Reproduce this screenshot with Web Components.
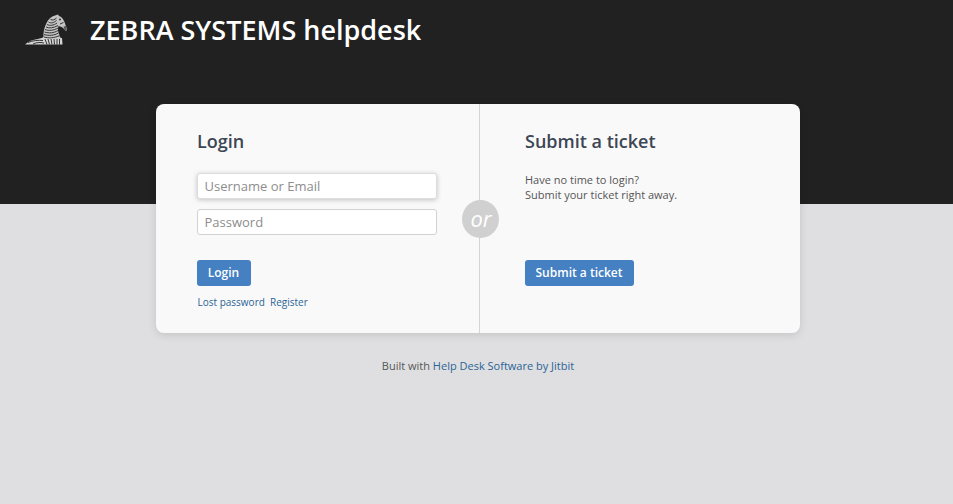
<!DOCTYPE html>
<html>
<head>
<meta charset="utf-8">
<title>ZEBRA SYSTEMS helpdesk</title>
<style>
    html, body { margin: 0; padding: 0; }
    body {
        background: #dfdfe1;
        font-family: "Open Sans", "Noto Sans", sans-serif;
        color: #333;
    }
</style>
</head>
<body>
<hd-header title-text="ZEBRA SYSTEMS helpdesk"></hd-header>
<hd-card>
    <hd-pane slot="left" heading="Login">
        <hd-field placeholder="Username or Email" focused></hd-field>
        <hd-field placeholder="Password"></hd-field>
        <hd-button slot="action">Login</hd-button>
        <div slot="links" style="font-size:10px;line-height:14px;color:#2a6496;padding-left:.5px">Lost password&nbsp; Register</div>
    </hd-pane>
    <hd-pane slot="right" heading="Submit a ticket">
        <div style="font-size:11px;line-height:15px;color:#555;margin-top:-1px">Have no time to login?<br>Submit your ticket right away.</div>
        <hd-button slot="action">Submit a ticket</hd-button>
    </hd-pane>
</hd-card>
<hd-footer></hd-footer>

<script>
class HdHeader extends HTMLElement {
    constructor() {
        super();
        this.attachShadow({ mode: 'open' });
        this.shadowRoot.innerHTML = `
<style>
    :host {
        display: flex;
        align-items: flex-start;
        box-sizing: border-box;
        height: 204px;
        padding: 12px 0 0 24px;
        gap: 22px;
        background: #212121;
    }
    h1 {
        margin: 0;
        color: #fff;
        font-size: 27px;
        line-height: 36px;
        font-weight: 600;
    }
    svg { display: block; margin-top: 2px; filter: blur(.3px); }
</style>
<svg width="44" height="34" viewBox="0 0 44 34">
    <!-- rump and belly -->
    <path fill="#d4d4d4" d="M1 30.500 C4 27.500 9 25.500 14 25 C16 24.500 18 24 19.500 23 L38 24 L38.500 30.500 Z"/>
    <!-- neck and head -->
    <path fill="#c4c4c4" d="M19.500 24 C19 19 20 14 22.500 9 C24.500 5 27 2.500 31 1.500 L34 0.500 L35 2 C38.500 3 40.500 7 41.500 11 C42.500 13 43 15 42.500 17 C41 16.500 40 14.500 38.500 13.500 C37 12.500 35.500 12.500 34.500 12 C33.500 15 34 18 35.500 21 L37 25 Z"/>
    <!-- stripes -->
    <g fill="none" stroke="#222" stroke-width=".9">
        <path d="M4 28.500 C9 26.500 14 26 19 26.500"/>
        <path d="M9 30 C12 28.500 16 28 20 29"/>
        <path d="M21 25 L23 30.500"/>
        <path d="M24 25 L25.500 30.500"/>
        <path d="M27 25 L28 30.500"/>
        <path d="M30 25 L30.500 30.500"/>
        <path d="M33 25 L33 30.500"/>
        <path d="M35.500 25 L35.500 30.500"/>
        <path d="M20 23 C25 24.500 30 24 36 21.500"/>
        <path d="M20 20.500 C25 22 30 21.500 34.500 19"/>
        <path d="M20.500 18 C25 19.500 30 19 34 16.500"/>
        <path d="M21 15.500 C25 17 29.500 16.500 34 14"/>
        <path d="M22 13 C25 14.500 29.500 14 34 11.500"/>
        <path d="M23 10.500 C26 12 29.500 11.500 33 9"/>
        <path d="M24.500 8 C27 9.500 29.500 9 32.500 6.500"/>
        <path d="M26.500 5.500 C28.500 6.500 30.500 6 32.500 4"/>
        <path d="M36 10 L39.500 8.500"/>
    </g>
    <!-- eye and muzzle -->
    <circle cx="36" cy="5.500" r=".9" fill="#222"/>
    <path fill="#555" d="M39.500 12.500 L42 12 L42.500 17 L40.500 15.500 Z"/>
</svg>
<h1>${this.getAttribute('title-text')}</h1>
`;
    }
}

const cardTemplate = document.createElement('template');
cardTemplate.innerHTML = `
<style>
    :host {
        display: flex;
        position: relative;
        box-sizing: border-box;
        width: 644px;
        height: 229px;
        margin: -100px auto 0 156px;
        background: #f9f9f9;
        border-radius: 8px;
        box-shadow: 0 2px 8px rgba(0,0,0,0.12);
    }
    .side { display: block; }
    .left { flex: 0 0 323px; border-right: 1px solid #d5d5d5; }
    .right { flex: 1; }
    .or {
        position: absolute;
        left: 306px;
        top: 96px;
        width: 37px;
        height: 38px;
        border-radius: 50%;
        background: #d0d0d0;
        color: #fff;
        font-size: 22px;
        font-style: italic;
        line-height: 36px;
        text-align: center;
        text-indent: 1px;
    }
</style>
<div class="side left"><slot name="left"></slot></div>
<div class="side right"><slot name="right"></slot></div>
<div class="or">or</div>
`;

class HdCard extends HTMLElement {
    constructor() {
        super();
        this.attachShadow({ mode: 'open' });
        this.shadowRoot.appendChild(cardTemplate.content.cloneNode(true));
    }
}

const paneTemplate = document.createElement('template');
paneTemplate.innerHTML = `
<style>
    :host {
        display: flex;
        flex-direction: column;
        box-sizing: border-box;
        height: 100%;
        padding: 24px 0 0 41px;
    }
    :host([slot=right]) { padding-left: 45px; }
    h2 {
        margin: 0 0 18px;
        font-size: 18px;
        line-height: 27px;
        font-weight: 600;
        color: #3c4654;
    }
    .body { display: flex; flex-direction: column; gap: 10px; height: 87px; }
    .links { margin-top: 9px; }
</style>
<h2></h2>
<div class="body"><slot></slot></div>
<slot name="action"></slot>
<div class="links"><slot name="links"></slot></div>
`;

class HdPane extends HTMLElement {
    constructor() {
        super();
        this.attachShadow({ mode: 'open' });
        this.shadowRoot.appendChild(paneTemplate.content.cloneNode(true));
        this.shadowRoot.querySelector('h2').textContent = this.getAttribute('heading');
    }
}

class HdField extends HTMLElement {
    constructor() {
        super();
        this.attachShadow({ mode: 'open' });
        this.shadowRoot.innerHTML = `
<style>
    :host { display: block; width: 240px; height: 26px; }
    input {
        display: block;
        box-sizing: border-box;
        width: 100%;
        height: 100%;
        margin: 0;
        padding: 0 6.500px;
        border: 1px solid #d2d2d2;
        border-radius: 3px;
        background: #fff;
        font: 13px "Open Sans", sans-serif;
        outline: none;
    }
    input::placeholder { color: #8d8d8d; opacity: 1; }
    :host([focused]) input { box-shadow: 0 1px 5px rgba(0,0,0,0.22); border-color: #ddd; }
</style>
<input type="text">
`;
        this.shadowRoot.querySelector('input').placeholder = this.getAttribute('placeholder');
    }
}

class HdButton extends HTMLElement {
    constructor() {
        super();
        this.attachShadow({ mode: 'open' });
        this.shadowRoot.innerHTML = `
<style>
    :host {
        display: block;
        align-self: flex-start;
        box-sizing: border-box;
        min-width: 54px;
        height: 26px;
        padding: 0 11.500px 0 10.500px;
        border-radius: 3px;
        background: #4480c2;
        color: #fff;
        font-size: 12px;
        font-weight: 600;
        line-height: 25px;
        text-align: center;
    }
</style>
<slot></slot>
`;
    }
}

class HdFooter extends HTMLElement {
    constructor() {
        super();
        this.attachShadow({ mode: 'open' });
        this.shadowRoot.innerHTML = `
<style>
    :host {
        display: block;
        margin-top: 25px;
        padding-left: 3px;
        font-size: 11px;
        line-height: 15px;
        text-align: center;
        color: #555;
    }
    a { color: #2a6496; text-decoration: none; }
</style>
Built with <a>Help Desk Software by Jitbit</a>
`;
    }
}

customElements.define('hd-header', HdHeader);
customElements.define('hd-card', HdCard);
customElements.define('hd-pane', HdPane);
customElements.define('hd-field', HdField);
customElements.define('hd-button', HdButton);
customElements.define('hd-footer', HdFooter);
</script>
</body>
</html>
